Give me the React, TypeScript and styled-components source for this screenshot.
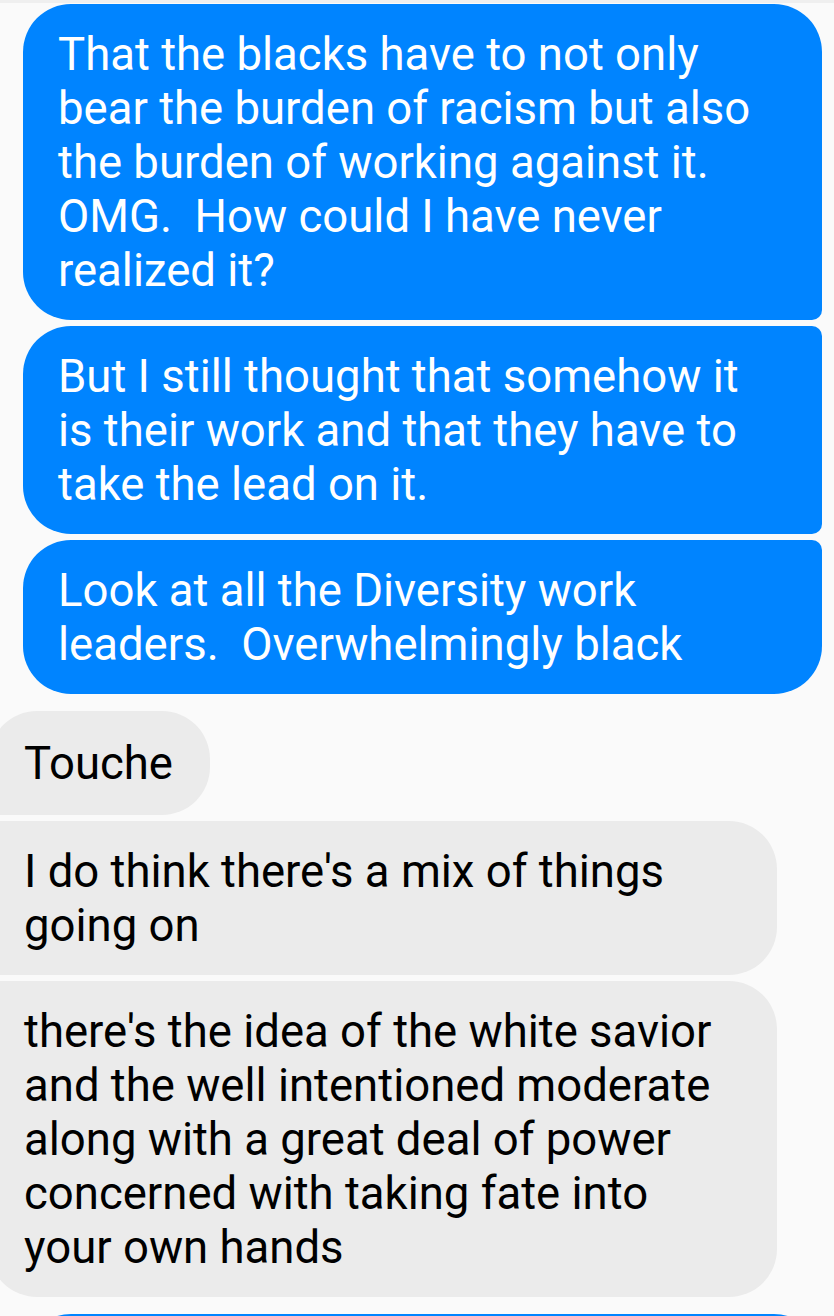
import React from "react";
import styled, { createGlobalStyle, css } from "styled-components";

const Global = createGlobalStyle`
  html, body {
    margin: 0;
    padding: 0;
    background: #fafafa;
    overflow: hidden;
  }
  * { box-sizing: border-box; }
`;

const Thread = styled.div`
  width: 834px;
  height: 1316px;
  overflow: hidden;
  background: #fafafa;
  border-top: 3px solid #efefef;
  padding-top: 1px;
  display: flex;
  flex-direction: column;
  font-family: Roboto, "Noto Sans", Arial, sans-serif;
`;

const Group = styled.div<{ $side: "me" | "them" }>`
  display: flex;
  flex-direction: column;
  gap: 6px;
  align-items: ${(p) => (p.$side === "me" ? "flex-end" : "flex-start")};
  padding-right: ${(p) => (p.$side === "me" ? "12px" : "0")};
  margin-bottom: 17px;
  flex-shrink: 0;
`;

type Pos = "first" | "middle" | "last" | "single";

const L = 48;
const S = 10;

function radii(side: "me" | "them", pos: Pos) {
  // TL TR BR BL
  if (side === "me") {
    switch (pos) {
      case "first":
        return `${L}px ${L}px ${S}px ${L}px`;
      case "middle":
        return `${L}px ${S}px ${S}px ${L}px`;
      case "last":
        return `${L}px ${S}px ${L}px ${L}px`;
      default:
        return `${L}px`;
    }
  }
  switch (pos) {
    case "first":
      return `${L}px ${L}px ${L}px ${S}px`;
    case "middle":
      return `${S}px ${L}px ${L}px ${S}px`;
    case "last":
      return `${S}px ${L}px ${L}px ${L}px`;
    default:
      return `${L}px`;
  }
}

const Bubble = styled.div<{ $side: "me" | "them"; $pos: Pos; $fit?: boolean }>`
  min-height: 104px;
  padding: 24px 48px 22px 35px;
  font-size: 45.5px;
  line-height: 54px;
  display: flex;
  align-items: center;
  border-radius: ${(p) => radii(p.$side, p.$pos)};
  ${(p) =>
    p.$side === "me"
      ? css`
          background: #0084ff;
          color: #ffffff;
          width: 799px;
        `
      : css`
          background: #ebebeb;
          color: #000000;
          margin-left: -11px;
          width: ${p.$fit ? "auto" : "788px"};
          padding-right: ${p.$fit ? "37px" : "48px"};
        `}
`;

const Text = styled.span`
  display: block;
  white-space: pre-wrap;
`;

export default function App() {
  return (
    <>
      <Global />
      <Thread>
        <Group $side="me">
          <Bubble $side="me" $pos="first">
            <Text>
              That the blacks have to not only bear the burden of racism but also the burden of working against it.  OMG.  How could I have never realized it?
            </Text>
          </Bubble>
          <Bubble $side="me" $pos="middle">
            <Text>
              But I still thought that somehow it is their work and that they have to take the lead on it.
            </Text>
          </Bubble>
          <Bubble $side="me" $pos="last">
            <Text>Look at all the Diversity work leaders.  Overwhelmingly black</Text>
          </Bubble>
        </Group>
        <Group $side="them">
          <Bubble $side="them" $pos="first" $fit>
            <Text>Touche</Text>
          </Bubble>
          <Bubble $side="them" $pos="middle">
            <Text>I do think there's a mix of things going on</Text>
          </Bubble>
          <Bubble $side="them" $pos="last">
            <Text>
              there's the idea of the white savior and the well intentioned moderate along with a great deal of power concerned with taking fate into your own hands
            </Text>
          </Bubble>
        </Group>
        <Group $side="me">
          <Bubble $side="me" $pos="first">
            <Text> </Text>
          </Bubble>
        </Group>
      </Thread>
    </>
  );
}
